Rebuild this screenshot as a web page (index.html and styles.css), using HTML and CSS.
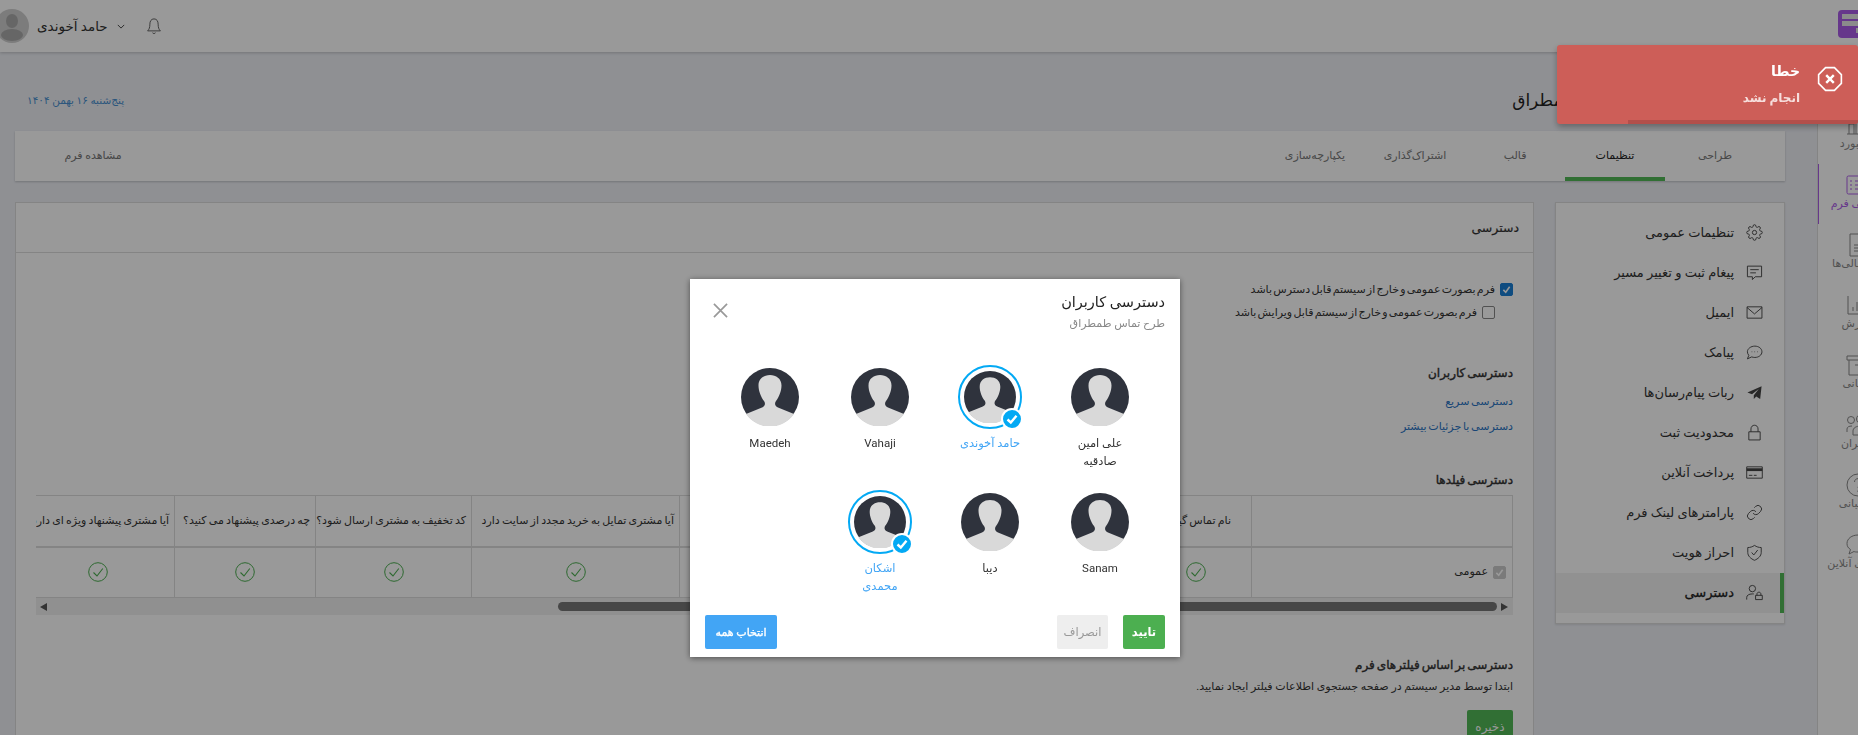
FILE: index.html
```html
<!DOCTYPE html>
<html lang="fa" dir="rtl">
<head>
    <meta charset="UTF-8">
    <title>دسترسی</title>
    <link rel="stylesheet" href="styles.css">
</head>
<body>
    <svg class="sprite" width="0" height="0">
        <symbol id="person" viewBox="0 0 58 58">
            <circle cx="29" cy="29" r="29" fill="#2f333d"/>
            <path fill="#d9d9d9" d="M5 46 L21 39.500 C24.500 38 24.500 35 23 33 C20 29 17.500 23 17.500 17.500 C17.500 10.500 23 7 29 7 C35 7 40.500 10.500 40.500 17.500 C40.500 23 38 29 35 33 C33.500 35 33.500 38 37 39.500 L53 46 A29 29 0 0 1 5 46 Z"/>
        </symbol>
        <symbol id="ok" viewBox="0 0 20 20">
            <circle cx="10" cy="10" r="9.300" fill="none" stroke="#4caf50" stroke-width="1"/>
            <path d="M5.500 10.500 L9 14 L14.800 6.500" fill="none" stroke="#4caf50" stroke-width="1.100"/>
        </symbol>
        <symbol id="tick" viewBox="0 0 22 22">
            <circle cx="11" cy="11" r="10" fill="#03a9f4" stroke="#fff" stroke-width="2"/>
            <path d="M6.500 11.500 L9.800 14.500 L15.500 7.800" fill="none" stroke="#fff" stroke-width="2.400"/>
        </symbol>
    </svg>

    <header class="topbar">
        <div class="logo"><span class="logo-a"></span><span class="logo-b"></span><span class="logo-c"></span></div>
        <div class="user-box">
            <svg class="bell" viewBox="0 0 24 24"><path d="M12 2.500 C8 2.500 6.500 6 6.500 9.500 C6.500 14 5.500 16.500 3.500 18.500 H20.500 C18.500 16.500 17.500 14 17.500 9.500 C17.500 6 16 2.500 12 2.500 Z M10 21 C10.500 22.300 13.500 22.300 14 21"/></svg>
            <svg class="chevron" viewBox="0 0 10 6"><path d="M1 1 L5 5 L9 1"/></svg>
            <span class="user-name">حامد آخوندی</span>
            <svg class="user-pic" viewBox="0 0 34 34"><circle cx="17" cy="17" r="17" fill="#cfcfcf"/><ellipse cx="17" cy="12" rx="6" ry="7" fill="#aaa"/><ellipse cx="17" cy="26" rx="11" ry="6" fill="#aaa"/></svg>
        </div>
    </header>

    <div class="layout">
        <nav class="rail">
            <div class="rail-inner">
                <a class="rail-item"><svg viewBox="0 0 24 24"><path d="M3 21 V11 H8 V21 M10 21 V5 H15 V21 M17 21 V8 H22 V21 M1 21 H23"/></svg>داشبورد</a>
                <a class="rail-item active"><svg viewBox="0 0 24 24"><rect x="1" y="3" width="22" height="18" rx="1.500"/><path d="M4 8 H6 M9 8 H20 M4 12 H6 M9 12 H20 M4 16 H6 M9 16 H20"/></svg>طراحی فرم</a>
                <a class="rail-item"><svg viewBox="0 0 24 24"><path d="M4 1 H15 L21 7 V23 H4 Z M15 1 V7 H21 M8 12 H17 M8 15 H17 M8 18 H17"/></svg>فرم مالی‌ها</a>
                <a class="rail-item"><svg viewBox="0 0 24 24"><path d="M2 3 V21 H23 M7 18 V14 M11 18 V9 M15 18 V12 M19 18 V6"/></svg>گزارش</a>
                <a class="rail-item"><svg viewBox="0 0 24 24"><path d="M1 3 H23 V7 H1 Z M3 7 V22 H21 V7 M9 12 H15"/></svg>بایگانی</a>
                <a class="rail-item"><svg viewBox="0 0 24 24"><circle cx="5" cy="7" r="3.500"/><circle cx="15" cy="6" r="4.500"/><path d="M1 19 V16 C1 14 3 13 6 13 M7 22 V18 C7 15 10 13 15 13 C20 13 23 15 23 18 V22 Z"/></svg>کاربران</a>
                <a class="rail-item"><svg viewBox="0 0 24 24"><circle cx="12" cy="12" r="11"/><path d="M8.500 9 C8.500 4.500 15.500 4.500 15.500 9 C15.500 12 12 12 12 15 M12 17.500 V19"/></svg>پشتیبانی</a>
                <a class="rail-item"><svg viewBox="0 0 24 24"><path d="M12 2 C18 2 23 5.500 23 10.500 C23 15.500 18 19 12 19 C10 19 9 19 8 18.500 L3 21 L4.500 16.500 C2 15 1 13 1 10.500 C1 5.500 6 2 12 2 Z"/></svg>گفتگوی آنلاین</a>
            </div>
        </nav>

        <main class="page">
            <div class="page-head">
                <h1 class="page-title">فرم‌ها طرح تماس طمطراق</h1>
                <span class="today">پنج‌شنبه ۱۶ بهمن ۱۴۰۴</span>
            </div>

            <div class="tabs">
                <a class="tab">طراحی</a>
                <a class="tab active">تنظیمات</a>
                <a class="tab">قالب</a>
                <a class="tab">اشتراک‌گذاری</a>
                <a class="tab">یکپارچه‌سازی</a>
                <a class="tab tab-last">مشاهده فرم</a>
            </div>

            <div class="content">
                <aside class="side-menu">
                    <a class="side-item"><svg viewBox="0 0 24 24"><circle cx="12" cy="12" r="3"/><path d="M19.400 15a1.650 1.650 0 0 0 .33 1.820l.06.06a2 2 0 0 1 0 2.830 2 2 0 0 1-2.830 0l-.06-.06a1.650 1.650 0 0 0-1.820-.33 1.650 1.650 0 0 0-1 1.510V21a2 2 0 0 1-2 2 2 2 0 0 1-2-2v-.09A1.650 1.650 0 0 0 9 19.400a1.650 1.650 0 0 0-1.820.33l-.06.06a2 2 0 0 1-2.830 0 2 2 0 0 1 0-2.830l.06-.06a1.650 1.650 0 0 0 .33-1.820 1.650 1.650 0 0 0-1.510-1H3a2 2 0 0 1-2-2 2 2 0 0 1 2-2h.09A1.650 1.650 0 0 0 4.600 9a1.650 1.650 0 0 0-.33-1.820l-.06-.06a2 2 0 0 1 0-2.830 2 2 0 0 1 2.830 0l.06.06a1.650 1.650 0 0 0 1.820.33H9a1.650 1.650 0 0 0 1-1.510V3a2 2 0 0 1 2-2 2 2 0 0 1 2 2v.09a1.650 1.650 0 0 0 1 1.510 1.650 1.650 0 0 0 1.820-.33l.06-.06a2 2 0 0 1 2.830 0 2 2 0 0 1 0 2.830l-.06.06a1.650 1.650 0 0 0-.33 1.820V9a1.650 1.650 0 0 0 1.510 1H21a2 2 0 0 1 2 2 2 2 0 0 1-2 2h-.09a1.650 1.650 0 0 0-1.510 1z"/></svg>تنظیمات عمومی</a>
                    <a class="side-item"><svg viewBox="0 0 24 24"><path d="M2 3 H22 V18 H13 L9 22 V18 H2 Z M6 8 H18 M6 12.500 H14"/></svg>پیغام ثبت و تغییر مسیر</a>
                    <a class="side-item"><svg viewBox="0 0 24 24"><path d="M1.500 4 H22.500 V20 H1.500 Z M1.500 5 L12 14 L22.500 5"/></svg>ایمیل</a>
                    <a class="side-item"><svg viewBox="0 0 24 24"><path d="M12.500 3 C18 3 22.500 6.500 22.500 11 C22.500 15.500 18 19 12.500 19 C11 19 9.500 18.700 8 18.200 L2 21 L4 16 C2.800 14.700 2 13 2 11 C2 6.500 7 3 12.500 3 Z M8 11 H8.800 M12 11 H12.800 M16 11 H16.800"/></svg>پیامک</a>
                    <a class="side-item"><svg viewBox="0 0 24 24"><path class="solid" d="M22 3 L2 12 L8.500 14.500 L18 7 L11 16 V21 L14.500 17.500 L20 21 Z"/></svg>ربات پیام‌رسان‌ها</a>
                    <a class="side-item"><svg viewBox="0 0 24 24"><path d="M4 11 H20 V22.500 H4 Z M7 11 V7 C7 0 17 0 17 7 V11"/></svg>محدودیت ثبت</a>
                    <a class="side-item"><svg viewBox="0 0 24 24"><path d="M1 4 H23 V20 H1 Z M4 16 H9 M11 16 H15"/><path class="band" d="M1 6 H23 V10 H1 Z"/></svg>پرداخت آنلاین</a>
                    <a class="side-item"><svg viewBox="0 0 24 24"><path d="M10 13a5 5 0 0 0 7.540.54l3-3a5 5 0 0 0-7.070-7.070l-1.720 1.710"/><path d="M14 11a5 5 0 0 0-7.540-.54l-3 3a5 5 0 0 0 7.070 7.070l1.710-1.710"/></svg>پارامترهای لینک فرم</a>
                    <a class="side-item"><svg viewBox="0 0 24 24"><path d="M12 2 C15 4 18 5 21.500 5 V12 C21.500 17 17 21 12 23 C7 21 2.500 17 2.500 12 V5 C6 5 9 4 12 2 Z M8 12 L11 15.500 L16.500 8.500"/></svg>احراز هویت</a>
                    <a class="side-item active"><svg viewBox="0 0 24 24"><circle cx="9" cy="6.500" r="4.500"/><path d="M1 22 V19 C1 16 4 14 9 14 H11 M13.500 16 H23 V22 H13.500 Z M15.500 16 V14 C15.500 10.800 21 10.800 21 14 V16"/></svg>دسترسی</a>
                </aside>

                <section class="card">
                    <div class="card-head">دسترسی</div>
                    <div class="card-body">
                        <label class="check-row"><span class="box on"><svg viewBox="0 0 14 14"><path d="M3 7.500 L6 10.500 L11 3.500"/></svg></span>فرم بصورت عمومی و خارج از سیستم قابل دسترس باشد</label>
                        <label class="check-row indent"><span class="box"></span>فرم بصورت عمومی و خارج از سیستم قابل ویرایش باشد</label>

                        <h3 class="sub-title first">دسترسی کاربران</h3>
                        <a class="text-link first-link">دسترسی سریع</a>
                        <a class="text-link">دسترسی با جزئیات بیشتر</a>

                        <h3 class="sub-title fields">دسترسی فیلدها</h3>
                        <div class="table-wrap">
                            <table class="fields-table">
                                <colgroup>
                                    <col class="c-first"><col class="c-name"><col class="c-a"><col class="c-b"><col class="c-c"><col class="c-d"><col class="c-e"><col class="c-f">
                                </colgroup>
                                <thead>
                                    <tr>
                                        <th></th>
                                        <th>نام تماس گیرنده</th>
                                        <th>شماره تماس</th>
                                        <th>آیا مشتری از خرید خود راضی بود</th>
                                        <th>آیا مشتری تمایل به خرید مجدد از سایت دارد</th>
                                        <th>کد تخفیف به مشتری ارسال شود؟</th>
                                        <th>چه درصدی پیشنهاد می کنید؟</th>
                                        <th>آیا مشتری پیشنهاد ویژه ای دارد؟</th>
                                    </tr>
                                </thead>
                                <tbody>
                                    <tr>
                                        <td class="row-name"><span class="box off"><svg viewBox="0 0 14 14"><path d="M3 7.500 L6 10.500 L11 3.500"/></svg></span>عمومی</td>
                                        <td><svg class="ok"><use href="#ok"/></svg></td>
                                        <td><svg class="ok"><use href="#ok"/></svg></td>
                                        <td><svg class="ok"><use href="#ok"/></svg></td>
                                        <td><svg class="ok"><use href="#ok"/></svg></td>
                                        <td><svg class="ok"><use href="#ok"/></svg></td>
                                        <td><svg class="ok"><use href="#ok"/></svg></td>
                                        <td><svg class="ok"><use href="#ok"/></svg></td>
                                    </tr>
                                </tbody>
                            </table>
                        </div>
                        <div class="scroll-bar">
                            <span class="arrow right"></span>
                            <span class="thumb"></span>
                            <span class="arrow left"></span>
                        </div>

                        <h3 class="sub-title filters">دسترسی بر اساس فیلترهای فرم</h3>
                        <p class="hint">ابتدا توسط مدیر سیستم در صفحه جستجوی اطلاعات فیلتر ایجاد نمایید.</p>
                        <button class="save-btn">ذخیره</button>
                    </div>
                </section>
            </div>
        </main>
    </div>

    <div class="overlay"></div>

    <div class="modal">
        <div class="modal-head">
            <div>
                <div class="modal-title">دسترسی کاربران</div>
                <div class="modal-sub">طرح تماس طمطراق</div>
            </div>
            <svg class="modal-close" viewBox="0 0 16 16"><path d="M1 1 L15 15 M15 1 L1 15"/></svg>
        </div>
        <div class="people">
            <div class="person">
                <div class="pic"><svg><use href="#person"/></svg></div>
                <div class="person-name">علی امین صادقیه</div>
            </div>
            <div class="person selected">
                <div class="pic"><svg><use href="#person"/></svg><svg class="tick"><use href="#tick"/></svg></div>
                <div class="person-name">حامد آخوندی</div>
            </div>
            <div class="person">
                <div class="pic"><svg><use href="#person"/></svg></div>
                <div class="person-name">Vahaji</div>
            </div>
            <div class="person">
                <div class="pic"><svg><use href="#person"/></svg></div>
                <div class="person-name">Maedeh</div>
            </div>
            <div class="person">
                <div class="pic"><svg><use href="#person"/></svg></div>
                <div class="person-name">Sanam</div>
            </div>
            <div class="person">
                <div class="pic"><svg><use href="#person"/></svg></div>
                <div class="person-name">دیبا</div>
            </div>
            <div class="person selected">
                <div class="pic"><svg><use href="#person"/></svg><svg class="tick"><use href="#tick"/></svg></div>
                <div class="person-name">اشکان محمدی</div>
            </div>
        </div>
        <div class="modal-foot">
            <button class="btn btn-ok">تایید</button>
            <button class="btn btn-cancel">انصراف</button>
            <button class="btn btn-all">انتخاب همه</button>
        </div>
    </div>

    <div class="toast">
        <svg class="toast-icon" viewBox="0 0 24 24"><path d="M7.900 1.500 H16.100 L22.500 7.900 V16.100 L16.100 22.500 H7.900 L1.500 16.100 V7.900 Z"/><path class="toast-x" d="M8.500 8.500 L15.500 15.500 M15.500 8.500 L8.500 15.500"/></svg>
        <div>
            <div class="toast-title">خطا</div>
            <div class="toast-msg">انجام نشد</div>
        </div>
        <div class="toast-bar"></div>
    </div>
</body>
</html>
```

FILE: styles.css
```css
* {
    box-sizing: border-box;
}
html, body {
    height: 735px;
    overflow: hidden;
}
body {
    margin: 0;
    background-color: #eef0f6;
    color: #333;
    font-family: Roboto, "DejaVu Sans", sans-serif;
    font-size: 12px;
}
a {
    text-decoration: none;
}
svg {
    display: block;
}
.sprite {
    position: absolute;
}

/* top bar */
.topbar {
    height: 52px;
    background-color: #fff;
    box-shadow: 0 1px 3px rgba(0, 0, 0, 0.2);
    display: flex;
    align-items: center;
    justify-content: space-between;
    position: relative;
}
.logo {
    width: 28px;
    height: 28px;
    margin-right: -8px;
    margin-top: -4px;
    padding: 4px;
    border-radius: 4px;
    background-color: #ab5ce8;
    display: grid;
    grid-template-columns: 1fr 2fr;
    grid-template-rows: 5px 5px 5px;
    gap: 2px;
}
.logo span {
    background-color: #e8e8e8;
}
.logo-a {
    grid-column: 1 / 3;
}
.logo-b {
    grid-column: 1 / 3;
}
.user-box {
    display: flex;
    align-items: center;
    margin-left: -5px;
}
.bell {
    width: 18px;
    height: 20px;
    fill: none;
    stroke: #555;
    stroke-width: 1.200;
    margin-left: 20px;
}
.chevron {
    width: 8px;
    height: 5px;
    fill: none;
    stroke: #444;
    stroke-width: 1.200;
    margin-left: 9px;
}
.user-name {
    font-size: 13.500px;
    color: #333;
    margin-left: 8px;
    white-space: nowrap;
}
.user-pic {
    width: 34px;
    height: 34px;
}

.layout {
    display: flex;
}

/* right rail, cut by the window edge */
.rail {
    flex: 0 0 41px;
    height: 683px;
    overflow: hidden;
    background-color: #fff;
    border-left: 1px solid #ddd;
}
.rail-inner {
    width: 80px;
    margin-right: -40px;
    padding-top: 52px;
}
.rail-item {
    height: 60px;
    padding-top: 9px;
    display: flex;
    flex-direction: column;
    align-items: center;
    color: #888;
    font-size: 11px;
    white-space: nowrap;
    position: relative;
}
.rail-item svg {
    width: 26px;
    height: 24px;
    fill: none;
    stroke: #888;
    stroke-width: 1;
}
.rail-item.active {
    color: #ab5ce8;
}
.rail-item.active svg {
    stroke: #ab5ce8;
}
.rail-item.active::after {
    content: "";
    position: absolute;
    top: 0;
    bottom: 0;
    left: -1px;
    width: 2px;
    background-color: #ab5ce8;
}

/* page */
.page {
    flex: 1;
    min-width: 0;
    padding: 0 32px 0 15px;
}
.page-head {
    height: 32px;
    margin: 32px 0 15px;
    padding-left: 12px;
    display: flex;
    align-items: center;
    justify-content: space-between;
}
.page-title {
    margin: 0;
    padding-right: 79px;
    font-size: 17px;
    line-height: 30px;
    font-weight: normal;
    color: #222;
}
.today {
    font-size: 10.500px;
    color: #4a90d0;
}
.tabs {
    height: 50px;
    padding-right: 20px;
    background-color: #fff;
    box-shadow: 0 1px 2px rgba(0, 0, 0, 0.2);
    display: flex;
}
.tab {
    width: 100px;
    padding-bottom: 2px;
    display: flex;
    align-items: center;
    justify-content: center;
    color: #777;
    font-size: 11px;
    white-space: nowrap;
}
.tab.active {
    color: #222;
    border-bottom: 4px solid #52b957;
    padding-top: 2px;
    padding-bottom: 0;
}
.tab-last {
    margin-right: auto;
    margin-left: 28px;
}
.content {
    margin-top: 21px;
    display: flex;
    align-items: flex-start;
    gap: 21px;
}

/* settings menu */
.side-menu {
    flex: 0 0 230px;
    padding: 10px 0;
    background-color: #fff;
    border: 1px solid #ddd;
    box-shadow: 0 1px 2px rgba(0, 0, 0, 0.1);
}
.side-item {
    height: 40px;
    padding-right: 20px;
    padding-bottom: 1px;
    display: flex;
    align-items: center;
    gap: 10px;
    color: #333;
    font-size: 13px;
    white-space: nowrap;
}
.side-item svg {
    width: 17px;
    height: 17px;
    margin: 0 1.500px;
    fill: none;
    stroke: #444;
    stroke-width: 1.300;
}
.side-item .solid {
    fill: #444;
    stroke: none;
}
.side-item .band {
    fill: #444;
    stroke: none;
}
.side-item.active {
    background-color: #f2f2f2;
    box-shadow: inset -4px 0 0 #52b957;
    -webkit-text-stroke: 0.3px #222;
    color: #222;
}

/* main card */
.card {
    flex: 1;
    min-width: 0;
    height: 620px;
    background-color: #fff;
    border: 1px solid #ddd;
}
.card-head {
    height: 50px;
    padding-right: 14px;
    border-bottom: 1px solid #ddd;
    display: flex;
    align-items: center;
    font-size: 12.500px;
    -webkit-text-stroke: 0.2px #333;
    color: #333;
}
.card-body {
    padding: 25px 20px 0 20px;
}
.check-row {
    height: 23px;
    display: flex;
    align-items: center;
    gap: 5px;
    font-size: 11px;
    word-spacing: -1.500px;
    color: #333;
}
.check-row.indent {
    padding-right: 18px;
}
.box {
    flex: none;
    width: 13px;
    height: 13px;
    border: 1px solid #888;
    border-radius: 2px;
    background-color: #fff;
}
.box svg {
    width: 100%;
    height: 100%;
    fill: none;
    stroke: #fff;
    stroke-width: 2;
}
.box.on {
    background-color: #1a7fd6;
    border-color: #1a7fd6;
}
.box.off {
    background-color: #ccc;
    border-color: #ccc;
}
.sub-title {
    height: 20px;
    line-height: 20px;
    margin: 0;
    font-size: 12px;
    font-weight: normal;
    -webkit-text-stroke: 0.4px #333;
    word-spacing: -1px;
    color: #333;
}
.sub-title.first {
    margin-top: 39px;
}
.sub-title.fields {
    margin-top: 31px;
    margin-bottom: 5px;
}
.sub-title.filters {
    margin-top: 40px;
}
.text-link {
    display: block;
    height: 25px;
    line-height: 25px;
    font-size: 11px;
    word-spacing: -1px;
    color: #2a74c4;
}
.first-link {
    margin-top: 6px;
}
.table-wrap {
    overflow: hidden;
}
.fields-table {
    width: 1492px;
    table-layout: fixed;
    border-collapse: collapse;
}
.c-first { width: 261px; }
.c-name { width: 112px; }
.c-a { width: 180px; }
.c-b { width: 280px; }
.c-c { width: 208px; }
.c-d { width: 156px; }
.c-e { width: 141px; }
.c-f { width: 154px; }
.fields-table th, .fields-table td {
    height: 51px;
    padding: 0 5px;
    border: 1px solid #ddd;
    font-size: 11px;
    font-weight: normal;
    word-spacing: -0.500px;
    color: #333;
    white-space: nowrap;
    overflow: hidden;
    text-align: center;
}
.fields-table thead th {
    border-bottom-width: 2px;
}
.fields-table th {
    text-align: right;
}
.fields-table th:nth-child(2) {
    padding-right: 20px;
}
.fields-table td.row-name {
    text-align: right;
    padding-right: 6px;
}
.row-name .box {
    display: inline-block;
    vertical-align: middle;
    margin-left: 5px;
}
.ok {
    width: 20px;
    height: 20px;
    margin: 0 auto;
}
.scroll-bar {
    height: 17px;
    background-color: #f1f1f1;
    display: flex;
    align-items: center;
}
.arrow {
    flex: none;
    width: 0;
    height: 0;
    border-top: 4px solid transparent;
    border-bottom: 4px solid transparent;
}
.arrow.right {
    border-left: 7px solid #555;
    margin: 0 5px 0 4px;
}
.thumb {
    flex: 0 0 939px;
    height: 9px;
    border-radius: 5px;
    background-color: #777;
}
.arrow.left {
    border-right: 7px solid #555;
    margin-right: auto;
    margin-left: 4px;
}
.hint {
    height: 20px;
    line-height: 20px;
    margin: 2px 0 13px;
    font-size: 11px;
    color: #333;
}
.save-btn {
    width: 46px;
    height: 34px;
    padding: 0;
    border: none;
    border-radius: 2px;
    background-color: #52b957;
    color: #fff;
    font-family: inherit;
    font-size: 12px;
}

/* dim layer and dialog */
.overlay {
    position: fixed;
    inset: 0;
    background-color: rgba(0, 0, 0, 0.4);
}
.modal {
    position: fixed;
    left: 690px;
    top: 279px;
    width: 490px;
    height: 378px;
    padding: 14px 15px 15px;
    background-color: #fff;
    box-shadow: 0 1px 6px rgba(0, 0, 0, 0.5);
    display: flex;
    flex-direction: column;
}
.modal-head {
    display: flex;
    justify-content: space-between;
    align-items: flex-start;
}
.modal-title {
    font-size: 14.500px;
    line-height: 20px;
    color: #222;
}
.modal-sub {
    margin-top: 2px;
    font-size: 11px;
    line-height: 18px;
    color: #888;
}
.modal-close {
    width: 15px;
    height: 15px;
    margin: 10px 0 0 8px;
    fill: none;
    stroke: #999;
    stroke-width: 1.800;
}
.people {
    margin: 32px 10px 0;
    display: grid;
    grid-template-columns: repeat(4, 110px);
    grid-auto-rows: 125px;
}
.person {
    display: flex;
    flex-direction: column;
    align-items: center;
    color: #333;
}
.pic {
    width: 64px;
    height: 64px;
    border-radius: 50%;
    display: flex;
    align-items: center;
    justify-content: center;
    position: relative;
}
.pic svg {
    width: 58px;
    height: 58px;
}
.person-name {
    width: 66px;
    margin-top: 6px;
    font-size: 11.500px;
    line-height: 17.500px;
    text-align: center;
}
.person.selected .person-name {
    color: #42a5f5;
}
.person.selected .pic {
    border: 2px solid #03a9f4;
}
.person.selected .pic svg {
    width: 52px;
    height: 52px;
}
.person.selected .pic svg.tick {
    position: absolute;
    right: -3px;
    bottom: -3px;
    width: 22px;
    height: 22px;
}
.modal-foot {
    margin-top: auto;
    display: flex;
    gap: 15px;
}
.btn {
    height: 34px;
    padding: 0;
    border: none;
    border-radius: 2px;
    font-family: inherit;
    font-size: 11.500px;
}
.btn-ok {
    width: 42px;
    background-color: #4caf50;
    color: #fff;
    font-weight: bold;
}
.btn-cancel {
    width: 51px;
    background-color: #eee;
    color: #999;
}
.btn-all {
    width: 72px;
    margin-right: auto;
    background-color: #42a5f5;
    color: #fff;
    font-size: 11px;
    -webkit-text-stroke: 0.35px #fff;
}

/* toast */
.toast {
    position: fixed;
    top: 45px;
    right: 0;
    width: 301px;
    height: 79px;
    padding: 14px 15px 0 0;
    border-radius: 3px;
    background-color: #cd5e58;
    box-shadow: 0 3px 6px rgba(0, 0, 0, 0.3);
    color: #fff;
    display: flex;
    gap: 17px;
    overflow: hidden;
}
.toast-icon {
    flex: none;
    width: 26px;
    height: 26px;
    margin-top: 7px;
    fill: none;
    stroke: #fff;
    stroke-width: 1.500;
}
.toast-x {
    stroke-width: 2.200;
}
.toast-title {
    font-size: 14px;
    font-weight: bold;
    line-height: 24px;
}
.toast-msg {
    margin-top: 5px;
    font-size: 12px;
    font-weight: bold;
    line-height: 20px;
    color: #f6dedc;
}
.toast-bar {
    position: absolute;
    right: 0;
    bottom: 0;
    width: 230px;
    height: 4px;
    background-color: #b24f4b;
}
```
